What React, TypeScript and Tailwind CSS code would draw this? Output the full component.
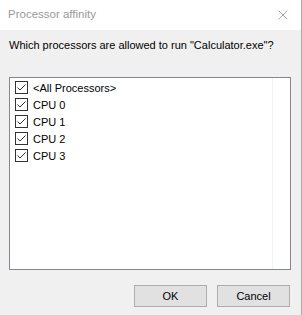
import { X } from "lucide-react";

const items = ["<All Processors>", "CPU 0", "CPU 1", "CPU 2", "CPU 3"];

function Check() {
  return (
    <span className="w-[13px] h-[13px] border border-[#333] bg-white flex items-center justify-center shrink-0">
      <svg width="11" height="11" viewBox="0 0 11 11">
        <path d="M1.5 5.5 L4 8 L9.5 2.5" fill="none" stroke="#333" strokeWidth="1" />
      </svg>
    </span>
  );
}

export default function App() {
  return (
    <div
      className="w-[302px] h-[315px] bg-[#f0f0f0] border-r border-[#aaa] flex flex-col text-[11px] text-black overflow-hidden"
      style={{ fontFamily: '"Liberation Sans", Arial, sans-serif' }}
    >
      <div className="h-[30px] bg-white flex items-center justify-between pl-[8px] pr-[10px] shrink-0">
        <span className="text-[11.5px] text-[#999]">Processor affinity</span>
        <X size={16} strokeWidth={1} color="#777" />
      </div>
      <div className="px-[9px] pt-[7px] leading-[16px] whitespace-nowrap">
        Which processors are allowed to run "Calculator.exe"?
      </div>
      <div className="mx-[9px] mt-[24px] h-[193px] w-[282px] border border-[#828790] bg-white flex shrink-0">
        <div className="flex-1 flex flex-col pl-[5px] pt-[1px]">
          {items.map((t) => (
            <div key={t} className="h-[17px] flex items-center gap-[5px]">
              <Check />
              <span className="leading-[16px]">{t}</span>
            </div>
          ))}
        </div>
        <div className="w-[18px] border-l border-[#eef3fa]" />
      </div>
      <div className="flex justify-end gap-[10px] pr-[11px] mt-[15px]">
        <button className="w-[73px] h-[22px] bg-[#e1e1e1] border border-[#adadad] leading-none">
          OK
        </button>
        <button className="w-[73px] h-[22px] bg-[#e1e1e1] border border-[#adadad] leading-none">
          Cancel
        </button>
      </div>
    </div>
  );
}
